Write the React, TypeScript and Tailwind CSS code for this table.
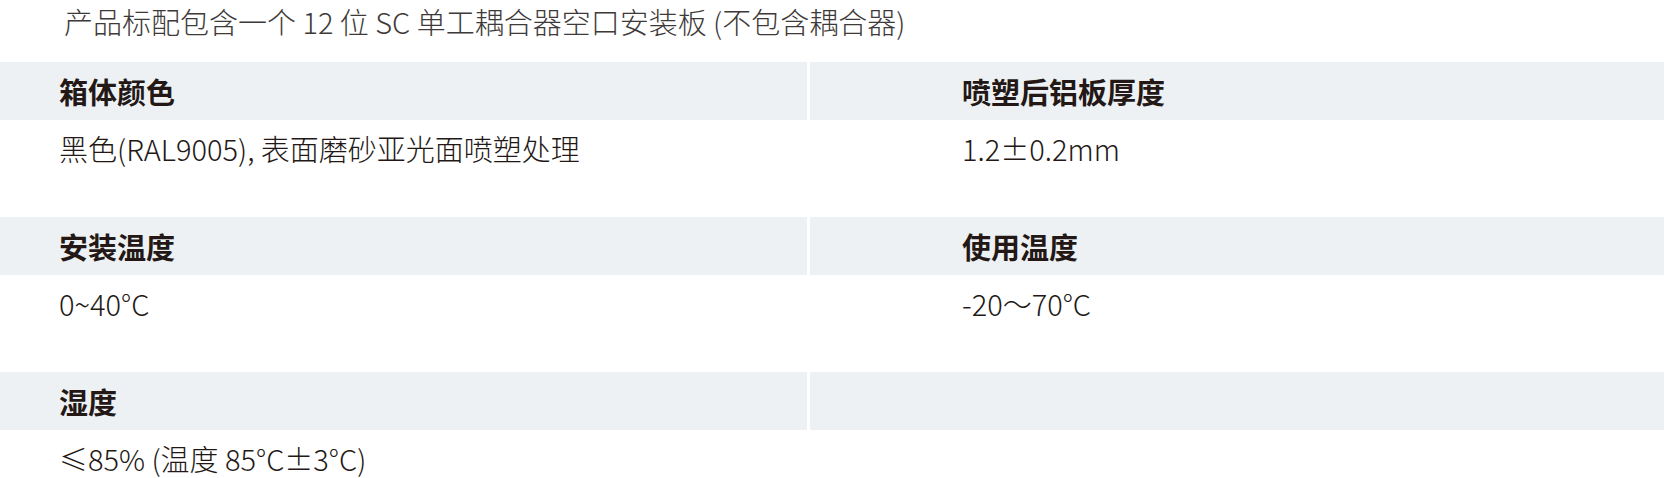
import React from "react";

const rows: { l: [string, string]; r: [string, string] }[] = [
  { l: ["箱体颜色", "黑色(RAL9005), 表面磨砂亚光面喷塑处理"], r: ["喷塑后铝板厚度", "1.2±0.2mm"] },
  { l: ["安装温度", "0~40°C"], r: ["使用温度", "-20～70°C"] },
  { l: ["湿度", "≤85% (温度 85°C±3°C)"], r: ["", ""] },
];

export default function App() {
  return (
    <div
      className="w-[1664px] h-[478px] overflow-hidden bg-white"
      style={{ fontFamily: '"Noto Sans CJK SC", "Noto Sans", sans-serif' }}
    >
      <div className="h-[62px] pl-[64px] text-[29px] leading-[42px] font-light text-[#3e3a39] whitespace-nowrap">
        产品标配包含一个 12 位 SC 单工耦合器空口安装板 (不包含耦合器)
      </div>
      {rows.map((row, i) => (
        <div key={i} className="flex flex-col">
          <div className="flex h-[58px]">
            <div className="w-[807px] bg-[#edf1f4] flex items-center pl-[59px] text-[29px] leading-[36px] font-bold text-[#231815]">
              {row.l[0]}
            </div>
            <div className="w-[3px] bg-white" />
            <div className="flex-1 bg-[#edf1f4] flex items-center pl-[152px] text-[29px] leading-[36px] font-bold text-[#231815]">
              {row.r[0]}
            </div>
          </div>
          <div className="flex h-[97px] pt-[10px]">
            <div className="w-[807px] pl-[59px] text-[29px] leading-[37px] font-light text-[#231815] whitespace-nowrap">
              {row.l[1]}
            </div>
            <div className="w-[3px]" />
            <div className="flex-1 pl-[152px] text-[29px] leading-[37px] font-light text-[#231815] whitespace-nowrap">
              {row.r[1]}
            </div>
          </div>
        </div>
      ))}
    </div>
  );
}
